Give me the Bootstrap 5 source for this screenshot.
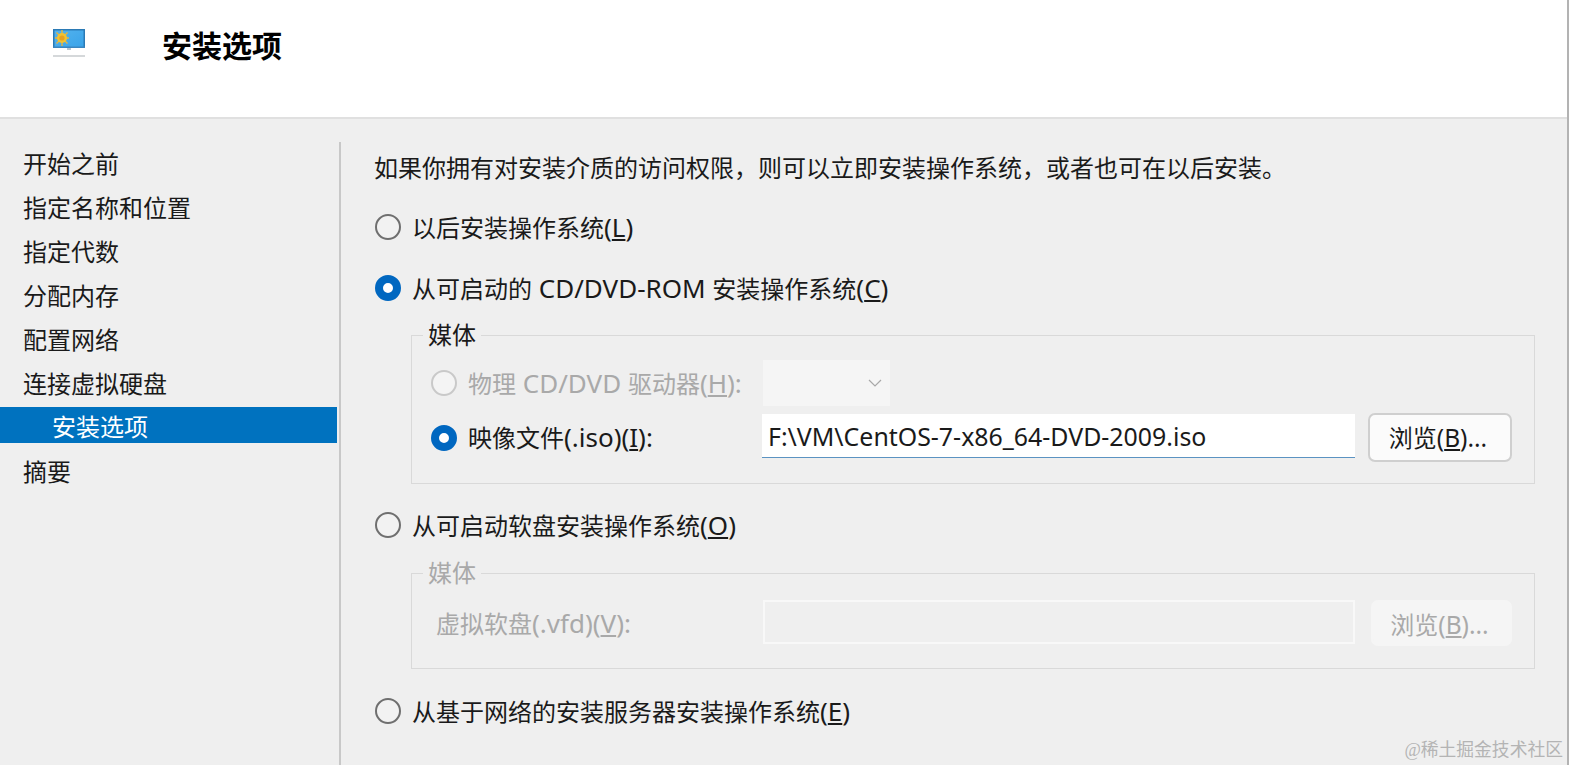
<!DOCTYPE html>
<html lang="zh-CN">
<head>
  <meta charset="UTF-8" />
  <meta name="viewport" content="width=device-width, initial-scale=1" />
  <title>安装选项</title>
  <link href="https://cdn.jsdelivr.net/npm/bootstrap@5.3.0/dist/css/bootstrap.min.css" rel="stylesheet" />
  <style>
    html, body { height: 100%; }
    body {
      background: #efefef;
      color: #1a1a1a;
      font-family: "Noto Sans", "Noto Sans CJK SC", sans-serif;
      font-size: 24px;
      line-height: 36px;
      overflow: hidden;
      border-right: 2px solid #b3b3b3;
    }
    .lat { font-size: 26px; }
    .media-btn .lat { font-size: 24.5px; }
    .wiz-head {
      height: 119px;
      background: #fff;
      border-bottom: 2px solid #e0e0e0;
      padding: 28px 0 0 52px;
    }
    .wiz-title {
      font-size: 30px;
      font-weight: 700;
      color: #000;
      margin: 0 0 0 76px;
      line-height: 36px;
    }
    .wiz-icon { margin-top: 1px; }
    .wiz-body { height: 646px; }
    .step-list { width: 337px; padding-top: 23px; flex: none; }
    .step-item { height: 44px; line-height: 43px; padding-left: 23px; }
    .step-item.is-active {
      height: 36px;
      line-height: 40px;
      margin: 1px 0 7px;
      padding-left: 52px;
      background: #0072bf;
      color: #fff;
    }
    .step-main {
      margin-top: 23px;
      margin-left: 2px;
      padding: 8px 32px 0 33px;
      border-left: 2px solid #c8c8c8;
      flex: 1;
    }
    .opt-row { height: 36px; }
    .opt-gap-a { margin-top: 23px; }
    .opt-gap-b { margin-top: 25px; }
    .opt-gap-c { margin-top: 23px; }
    .opt-gap-d { margin-top: 24px; }
    .opt-radio.form-check-input {
      width: 26px;
      height: 26px;
      margin: 0 11px 0 1px;
      flex: none;
      background: #f2f2f2;
      border: 2px solid #6f6f6f;
      box-shadow: none;
    }
    .opt-radio.form-check-input:checked {
      background: #fff;
      border: 8px solid #0067c0;
    }
    .opt-radio.form-check-input:disabled {
      opacity: 1;
      background: #f4f4f4;
      border-color: #c9c9c9;
    }
    .media-box {
      margin: 12px 0 0 37px;
      padding: 8px 22px 21px 18px;
      border: 1px solid #d9d9d9;
      min-width: 0;
    }
    .media-box.is-off { margin-top: 13px; padding-top: 10px; padding-bottom: 22px; }
    .media-box legend {
      float: none;
      width: auto;
      margin: 0 0 0 -7px;
      padding: 0 5px;
      font-size: inherit;
      line-height: 34px;
    }
    .is-off legend, .is-mute { color: #a9a9a9; }
    .media-line { display: flex; align-items: center; }
    .media-line.is-next { margin-top: 7px; }
    .media-label { width: 332px; flex: none; display: flex; align-items: center; margin: 0; }
    .media-label.is-plain { display: block; padding-left: 6px; }
    .media-select.form-select {
      width: 127px;
      height: 46px;
      margin-left: 1px;
      border: 0;
      border-radius: 0;
      background-color: #f5f5f5;
      background-image: url("data:image/svg+xml,%3csvg xmlns='http://www.w3.org/2000/svg' viewBox='0 0 14 14'%3e%3cpath fill='none' stroke='%23a8a8a8' stroke-width='1.2' d='M1 4l6 6 6-6'/%3e%3c/svg%3e");
      background-position: right 8px center;
      background-size: 14px 14px;
    }
    .media-input.form-control {
      flex: 1;
      height: 44px;
      align-self: flex-start;
      margin-top: 1px;
      padding: 0 5px 0 6px;
      border: 0;
      border-bottom: 1px solid #5b93c2;
      border-radius: 0;
      background: #fff;
      color: #1a1a1a;
      font-size: 24.9px;
      box-shadow: none;
    }
    .media-input.form-control:disabled {
      margin-top: 0;
      margin-left: 1px;
      background: #efefef;
      border: 2px solid #f8f8f8;
    }
    .media-btn.btn {
      width: 144px;
      height: 49px;
      margin-left: 13px;
      padding: 0 4px 0 0;
      border: 2px solid #cfcfcf;
      border-radius: 7px;
      background: #fbfbfb;
      color: #1a1a1a;
      font-size: 24px;
      line-height: 45px;
    }
    .media-btn.btn:disabled {
      opacity: 1;
      height: 46px;
      width: 141px;
      margin-left: 16px;
      border-color: #f5f5f5;
      background: #f5f5f5;
      color: #a9a9a9;
    }
    .water-mark {
      position: absolute;
      right: 6px;
      bottom: 3px;
      font-family: "Liberation Serif", "Noto Sans CJK SC", serif;
      font-size: 17.8px;
      line-height: 24px;
      color: #b4b4b4;
    }
  </style>
</head>
<body>
  <header class="wiz-head d-flex align-items-start">
    <svg class="wiz-icon" width="34" height="30" viewBox="0 0 34 30" aria-hidden="true">
      <defs>
        <linearGradient id="screen" x1="0" y1="0" x2="1" y2="1">
          <stop offset="0" stop-color="#55b4ef" />
          <stop offset="1" stop-color="#38a2e8" />
        </linearGradient>
      </defs>
      <rect x="1" y="0" width="32" height="19" fill="url(#screen)" />
      <rect x="1" y="0" width="32" height="1.5" fill="#2b7ab5" />
      <rect x="1" y="0" width="1.5" height="19" fill="#2b7ab5" />
      <rect x="31.5" y="0" width="1.5" height="19" fill="#2b7ab5" />
      <rect x="1" y="17.5" width="32" height="1.5" fill="#3a86c0" />
      <g stroke="#e9b53c" stroke-width="1.4">
        <path d="M10 1v16M3 9h14M4.5 3.5l11 11M15.5 3.5l-11 11" />
      </g>
      <circle cx="10" cy="9" r="5" fill="#f2c230" />
      <circle cx="10" cy="9" r="2.6" fill="#e8a020" />
      <rect x="15" y="19" width="4" height="2" fill="#b9c6d0" />
      <rect x="1" y="26" width="32" height="2" fill="#d5d8da" />
    </svg>
    <h1 class="wiz-title">安装选项</h1>
  </header>

  <div class="wiz-body d-flex">
    <nav class="step-list">
      <div class="step-item">开始之前</div>
      <div class="step-item">指定名称和位置</div>
      <div class="step-item">指定代数</div>
      <div class="step-item">分配内存</div>
      <div class="step-item">配置网络</div>
      <div class="step-item">连接虚拟硬盘</div>
      <div class="step-item is-active">安装选项</div>
      <div class="step-item">摘要</div>
    </nav>

    <main class="step-main">
      <div class="opt-row">如果你拥有对安装介质的访问权限，则可以立即安装操作系统，或者也可在以后安装。</div>

      <label class="opt-row opt-gap-a d-flex align-items-center">
        <input class="form-check-input opt-radio" type="radio" name="boot" />
        <span>以后安装操作系统<span class="lat">(<u>L</u>)</span></span>
      </label>

      <label class="opt-row opt-gap-b d-flex align-items-center">
        <input class="form-check-input opt-radio" type="radio" name="boot" checked />
        <span>从可启动的<span class="lat"> CD/DVD-ROM </span>安装操作系统<span class="lat">(<u>C</u>)</span></span>
      </label>

      <fieldset class="media-box">
        <legend>媒体</legend>
        <div class="media-line">
          <label class="media-label is-mute">
            <input class="form-check-input opt-radio" type="radio" name="media" disabled />
            <span>物理<span class="lat"> CD/DVD </span>驱动器<span class="lat">(<u>H</u>):</span></span>
          </label>
          <select class="form-select media-select" disabled></select>
        </div>
        <div class="media-line is-next">
          <label class="media-label">
            <input class="form-check-input opt-radio" type="radio" name="media" checked />
            <span>映像文件<span class="lat">(.iso)(<u>I</u>):</span></span>
          </label>
          <input class="form-control media-input" type="text" value="F:\VM\CentOS-7-x86_64-DVD-2009.iso" />
          <button class="btn media-btn" type="button">浏览<span class="lat">(<u>B</u>)...</span></button>
        </div>
      </fieldset>

      <label class="opt-row opt-gap-c d-flex align-items-center">
        <input class="form-check-input opt-radio" type="radio" name="boot" />
        <span>从可启动软盘安装操作系统<span class="lat">(<u>O</u>)</span></span>
      </label>

      <fieldset class="media-box is-off" disabled>
        <legend>媒体</legend>
        <div class="media-line">
          <label class="media-label is-mute is-plain">虚拟软盘<span class="lat">(.vfd)(<u>V</u>):</span></label>
          <input class="form-control media-input" type="text" disabled />
          <button class="btn media-btn" type="button" disabled>浏览<span class="lat">(<u>B</u>)...</span></button>
        </div>
      </fieldset>

      <label class="opt-row opt-gap-d d-flex align-items-center">
        <input class="form-check-input opt-radio" type="radio" name="boot" />
        <span>从基于网络的安装服务器安装操作系统<span class="lat">(<u>E</u>)</span></span>
      </label>
    </main>
  </div>

  <div class="water-mark">@稀土掘金技术社区</div>

  <script src="https://cdn.jsdelivr.net/npm/bootstrap@5.3.0/dist/js/bootstrap.bundle.min.js"></script>
</body>
</html>
